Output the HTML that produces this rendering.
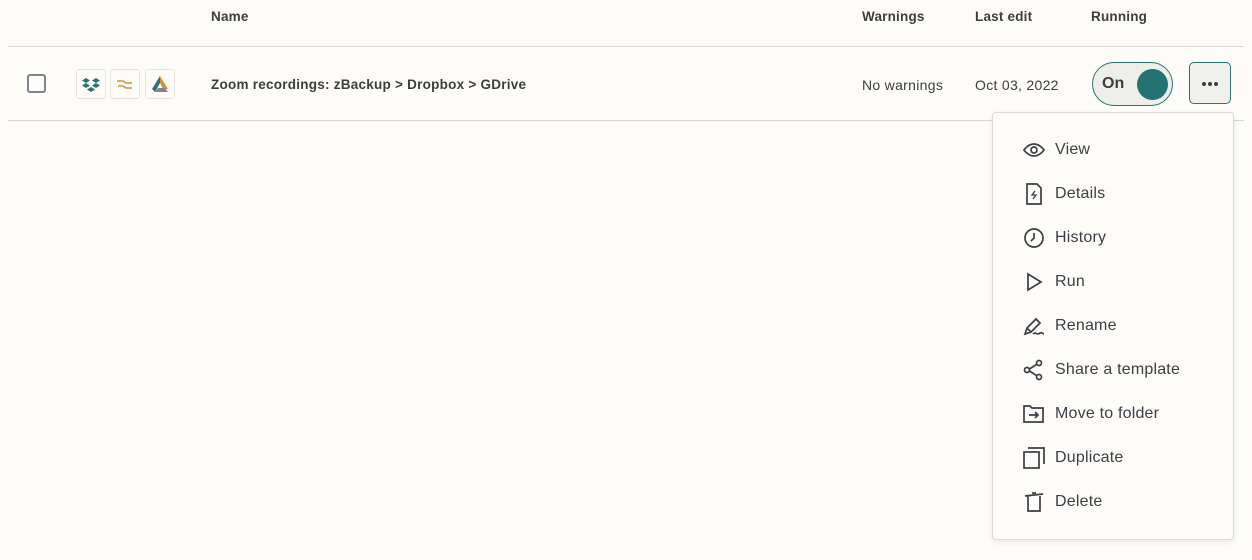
<!DOCTYPE html>
<html><head><style>
body{margin:0;width:1252px;height:560px;background:#fdfcf9;font-family:"Liberation Sans",sans-serif;color:#3a3a3a;position:relative;overflow:hidden}
.a{position:absolute}
.h{font-size:13.5px;font-weight:bold;top:9px;color:#3d3d3d;letter-spacing:.2px}
.line{position:absolute;left:8px;width:1236px;height:1px;background:#d8d7d2}
.ic{position:absolute;top:69px;width:28px;height:28px;border:1px solid #e5e4df;border-radius:3px;background:#fdfcf9}
.menu{position:absolute;left:992px;top:112px;width:240px;height:426px;background:#fdfcf9;border:1px solid #dcdbd6;border-radius:4px;box-shadow:0 2px 6px rgba(0,0,0,.08)}
.mi{position:absolute;left:62px;font-size:16px;color:#3d3d45;letter-spacing:.2px}
.mi svg{position:absolute;left:-32px;top:-2px}
</style></head><body>
<div class="a h" style="left:211px">Name</div>
<div class="a h" style="left:862px">Warnings</div>
<div class="a h" style="left:975px">Last edit</div>
<div class="a h" style="left:1091px">Running</div>
<div class="line" style="top:46px"></div>
<div class="line" style="top:120px"></div>
<div class="a" style="left:27px;top:74px;width:15px;height:15px;border:2px solid #7e858c;border-radius:3px"></div>
<div class="ic" style="left:76px"><svg width="28" height="28" viewBox="0 0 28 28"><g fill="#2a7474"><path d="M9 8l4 2.5-4 2.5-4-2.5zM19 8l4 2.5-4 2.5-4-2.5zM9 13l4 2.5-4 2.5-4-2.5zM19 13l4 2.5-4 2.5-4-2.5zM14 17l4 2.5-4 2.5-4-2.5z"/></g></svg></div>
<div class="ic" style="left:110px"><svg width="28" height="28" viewBox="0 0 28 28"><g fill="none" stroke="#d4913c" stroke-width="1.6"><path d="M6 11h6l3 2h6M7 16h5l3 2h6"/></g></svg></div>
<div class="ic" style="left:145px"><svg width="28" height="28" viewBox="0 0 28 28"><path d="M14 6l8 13h-5L14 13z" fill="#d4913c"/><path d="M14 6L6 19l3 3 5-9z" fill="#2a7474"/><path d="M9 22h13l-3-4h-7z" fill="#7e858c"/></svg></div>
<div class="a" style="left:211px;top:77px;font-size:13.5px;font-weight:bold;color:#3d3d3d;letter-spacing:.25px">Zoom recordings: zBackup &gt; Dropbox &gt; GDrive</div>
<div class="a" style="left:862px;top:77px;font-size:14px;color:#3d3d3d;letter-spacing:.3px">No warnings</div>
<div class="a" style="left:975px;top:77px;font-size:14px;color:#3d3d3d;letter-spacing:.3px">Oct 03, 2022</div>
<div class="a" style="left:1092px;top:62px;width:79px;height:42px;border:1.5px solid #2a7474;border-radius:22px;background:#eeeeea"></div>
<div class="a" style="left:1102px;top:75px;font-size:16px;font-weight:bold;color:#3d3d3d">On</div>
<div class="a" style="left:1137px;top:69px;width:31px;height:31px;border-radius:50%;background:#237373"></div>
<div class="a" style="left:1189px;top:62px;width:40px;height:40px;border:1.5px solid #2a7474;border-radius:5px;background:#f0f0ec"><svg width="40" height="40" viewBox="0 0 40 40"><g fill="#3d3d3d"><circle cx="14" cy="21" r="2"/><circle cx="20" cy="21" r="2"/><circle cx="26" cy="21" r="2"/></g></svg></div>
<div class="menu">
<div class="mi" style="top:28px"><svg width="22" height="22" viewBox="0 0 22 22" fill="none" stroke="#3d3d45" stroke-width="1.7"><path d="M1 11s4-6 10-6 10 6 10 6-4 6-10 6S1 11 1 11z"/><circle cx="11" cy="11" r="3"/></svg>View</div>
<div class="mi" style="top:72px"><svg width="22" height="22" viewBox="0 0 22 22" fill="none" stroke="#3d3d45" stroke-width="1.7"><path d="M4 1h10l4 4v16H4z"/><path d="M12 8l-3 4h4l-3 4" stroke-width="1.3"/></svg>Details</div>
<div class="mi" style="top:116px"><svg width="22" height="22" viewBox="0 0 22 22" fill="none" stroke="#3d3d45" stroke-width="1.7"><circle cx="11" cy="11" r="9"/><path d="M11 6v5l-3 3"/></svg>History</div>
<div class="mi" style="top:160px"><svg width="22" height="22" viewBox="0 0 22 22" fill="none" stroke="#3d3d45" stroke-width="1.7"><path d="M5 3v16l13-8z"/></svg>Run</div>
<div class="mi" style="top:204px"><svg width="22" height="22" viewBox="0 0 22 22" fill="none" stroke="#3d3d45" stroke-width="1.7"><path d="M2 19l2-6 9-9 4 4-9 9zM4 13l4 4M10 19c3-3 4 2 7-1 2-1 3 1 4 1"/></svg>Rename</div>
<div class="mi" style="top:248px"><svg width="22" height="22" viewBox="0 0 22 22" fill="none" stroke="#3d3d45" stroke-width="1.7"><circle cx="4" cy="11" r="2.5"/><circle cx="16" cy="4" r="2.5"/><circle cx="16" cy="18" r="2.5"/><path d="M6.5 10l7-4.5M6.5 12l7 4.5"/></svg>Share a template</div>
<div class="mi" style="top:292px"><svg width="22" height="22" viewBox="0 0 22 22" fill="none" stroke="#3d3d45" stroke-width="1.7"><path d="M1 3h6l2 2h11v14H1z"/><path d="M6 12h9M12 9l3 3-3 3"/></svg>Move to folder</div>
<div class="mi" style="top:336px"><svg width="22" height="22" viewBox="0 0 22 22" fill="none" stroke="#3d3d45" stroke-width="1.7"><rect x="1" y="5" width="15" height="16"/><path d="M5 1h16v16"/></svg>Duplicate</div>
<div class="mi" style="top:380px"><svg width="22" height="22" viewBox="0 0 22 22" fill="none" stroke="#3d3d45" stroke-width="1.7"><path d="M2 5l18-2M5 5v15h12V5M9 2h4"/></svg>Delete</div>
</div>
</body></html>
